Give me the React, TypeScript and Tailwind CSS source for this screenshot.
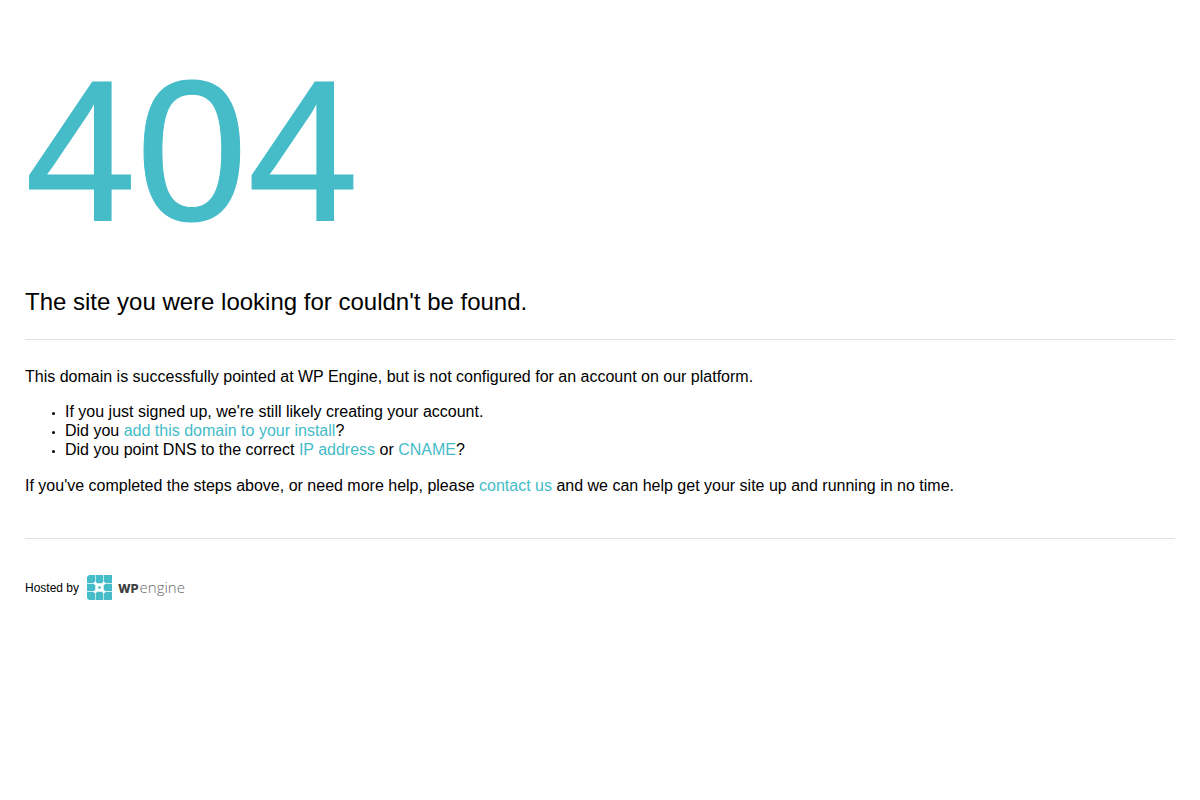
function WPEngineLogo() {
  return (
    <span className="flex items-center gap-[6px]">
      <svg width="25" height="25" viewBox="0 0 26 26" fill="#45bcc8" aria-hidden="true">
        <path d="M2 0H8.3V6.7L6.7 8.3H0V2Z" />
        <path d="M9 0H17V6.8L15.4 8.6H10.6L9 6.8Z" />
        <path d="M17.7 0H26V8.3H19.3L17.7 6.7Z" />
        <path d="M0 9H6.8L8.6 10.6V15.4L6.8 17H0Z" />
        <path d="M26 9H19.2L17.4 10.6V15.4L19.2 17H26Z" />
        <path d="M0 17.7H6.7L8.3 19.3V26H2L0 24Z" />
        <path d="M10.6 17.4H15.4L17 19.2V26H9V19.2Z" />
        <path d="M19.3 17.7H26V26H17.7V19.3Z" />
        <circle cx="13" cy="13" r="1.4" />
      </svg>
      <span className="flex items-baseline gap-px leading-[25px]">
        <strong className="font-['Inter',sans-serif] text-xs font-extrabold text-[#404040]">WP</strong>
        <span className="font-['Open_Sans',sans-serif] text-[15px] font-light text-[#6a6a6a]">engine</span>
      </span>
    </span>
  );
}

export default function App() {
  const link = "text-[#45bcc8]";
  return (
    <main className="min-h-screen bg-white px-[25px] font-['Liberation_Sans',sans-serif] text-base leading-[19px] text-black">
      <h1 className="pt-[36px] text-[200px] leading-[230px] text-[#45bcc8] [-webkit-text-stroke:1px_#45bcc8]">404</h1>
      <h2 className="pt-[21px] text-2xl leading-[29px]">The site you were looking for couldn't be found.</h2>
      <hr className="mt-[23px] border-[#e1e1e1]" />
      <p className="mt-[27px]">This domain is successfully pointed at WP Engine, but is not configured for an account on our platform.</p>
      <ul className="mt-4 mb-[17px] list-disc pl-10 marker:text-[10px]">
        <li>If you just signed up, we're still likely creating your account.</li>
        <li>Did you <a href="#install" className={link}>add this domain to your install</a>?</li>
        <li>Did you point DNS to the correct <a href="#ip" className={link}>IP address</a> or <a href="#cname" className={link}>CNAME</a>?</li>
      </ul>
      <p>If you've completed the steps above, or need more help, please <a href="#contact" className={link}>contact us</a> and we can help get your site up and running in no time.</p>
      <hr className="mt-[43px] border-[#e1e1e1]" />
      <footer className="mt-9 flex items-center gap-2 text-xs">
        <span>Hosted by</span>
        <WPEngineLogo />
      </footer>
    </main>
  );
}
